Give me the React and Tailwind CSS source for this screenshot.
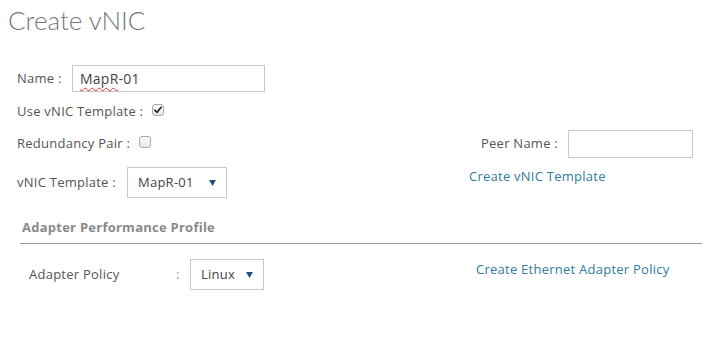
import React from 'react';

const Checkbox = ({ checked }) => (
    <span className="inline-flex items-center justify-center w-[12px] h-[12px] rounded-[3px] border border-[#a9a9a9] bg-gradient-to-b from-[#fdfdfd] to-[#e6e6e6]">
        {checked && (
            <svg viewBox="0 0 12 12" className="w-[10px] h-[10px]">
                <path d="M2.2 6.3 L4.8 8.8 L9.8 2.6" fill="none" stroke="#222" strokeWidth="2" strokeLinecap="round" strokeLinejoin="round" />
            </svg>
        )}
    </span>
);

const Select = ({ value, className }) => (
    <div className={`flex items-center justify-between border border-[#c8c8c8] bg-white pl-[10px] pr-[10px] h-[31px] text-[13px] text-[#444] ${className}`}>
        <span>{value}</span>
        <svg viewBox="0 0 8 7" className="w-[7px] h-[6px]">
            <path d="M0 0 L8 0 L4 7 Z" fill="#1e4f80" />
        </svg>
    </div>
);

const App = () => {
    return (
        <div className="w-[702px] h-[341px] bg-white font-['Open_Sans','Liberation_Sans',sans-serif] text-[13px] tracking-[0.25px] text-[#555] overflow-hidden">
            <h1 className="pl-[8px] pt-[3px] text-[26px] leading-[34px] tracking-normal font-light text-[#767676] font-['Lato',sans-serif]">Create vNIC</h1>

            <div className="pl-[17px] pr-[9px] mt-[28px]">
                <div className="flex items-center h-[27px]">
                    <span className="w-[55px]">Name :</span>
                    <div className="w-[193px] h-[27px] border border-[#c8c8c8] px-[7px] flex items-center text-[14px] text-[#444]">
                        <span className="underline decoration-wavy decoration-[#d33] decoration-1 underline-offset-[3px]">MapR</span>-01
                    </div>
                </div>

                <div className="flex items-center h-[24px] mt-[8px]">
                    <span>Use vNIC Template :</span>
                    <span className="ml-[9px] -mt-[4px] flex"><Checkbox checked /></span>
                </div>

                <div className="flex items-center justify-between h-[32px] mt-[4px]">
                    <div className="flex items-center">
                        <span>Redundancy Pair :</span>
                        <span className="ml-[9px] -mt-[5px] flex"><Checkbox /></span>
                    </div>
                    <div className="flex items-center">
                        <span>Peer Name :</span>
                        <div className="ml-[10px] w-[125px] h-[28px] border border-[#c8c8c8]" />
                    </div>
                </div>

                <div className="flex justify-between h-[31px] mt-[7px]">
                    <div className="flex items-center">
                        <span className="w-[110px]">vNIC Template :</span>
                        <Select value="MapR-01" className="w-[100px]" />
                    </div>
                    <a className="w-[224px] text-[#2f7d99] leading-[16px] mt-[1px]">Create vNIC Template</a>
                </div>
            </div>

            <div className="ml-[20px] mt-[21px] border-b border-[#9a9a9a] pb-[8px] pl-[2px]">
                <h2 className="font-bold text-[#8a8a8a] leading-[16px]">Adapter Performance Profile</h2>
            </div>

            <div className="flex justify-between h-[31px] mt-[15px] pl-[29px] pr-[9px]">
                <div className="flex items-center">
                    <span className="w-[147px]">Adapter Policy</span>
                    <span className="w-[14px] text-[#999]">:</span>
                    <Select value="Linux" className="w-[74px]" />
                </div>
                <a className="w-[217px] self-center text-[#2f7d99] -mt-[10px]">Create Ethernet Adapter Policy</a>
            </div>
        </div>
    );
};

export default App;
